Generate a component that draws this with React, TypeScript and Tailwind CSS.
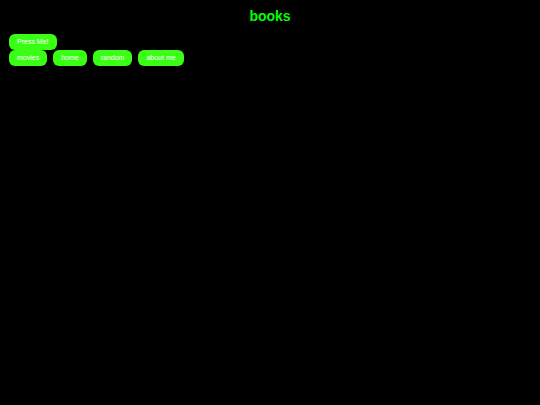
const buttonClass =
  "h-4 rounded-[6px] bg-[#39ff14] px-2 text-[7px] leading-4 text-white";

export default function App() {
  return (
    <main className="min-h-screen bg-black px-[9px] pt-2 font-['Liberation_Sans',Arial,sans-serif]">
      <h1 className="text-center text-[14px] leading-4 font-bold text-[#00ff00]">books</h1>
      <div className="mt-2.5 flex flex-col items-start">
        <button type="button" className={buttonClass}>Press Me!</button>
        <nav className="flex gap-1.5">
          <button type="button" className={buttonClass}>movies</button>
          <button type="button" className={buttonClass}>home</button>
          <button type="button" className={buttonClass}>random</button>
          <button type="button" className={buttonClass}>about me</button>
        </nav>
      </div>
    </main>
  );
}
